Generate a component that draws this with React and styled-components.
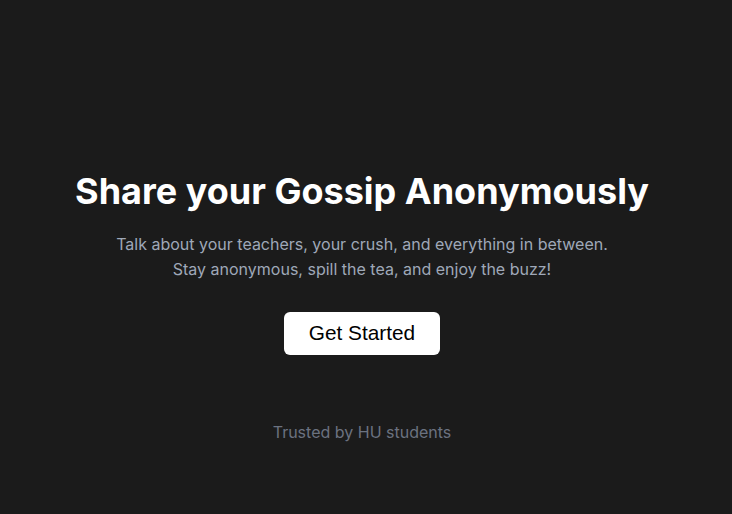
import React from "react";
import styled, { createGlobalStyle } from "styled-components";

const GlobalStyle = createGlobalStyle`
  html, body {
    margin: 0;
    padding: 0;
    background: #1b1b1b;
  }
  * {
    box-sizing: border-box;
  }
`;

const Page = styled.main`
  min-height: 514px;
  display: flex;
  flex-flow: column nowrap;
  align-items: center;
  justify-content: center;
  background: #1b1b1b;
  font-family: Inter, "Noto Sans", sans-serif;
  text-align: center;
  padding: 98px 8px 0 0;
`;

const Title = styled.h1`
  margin: 0 0 18px;
  color: #ffffff;
  font-size: 36px;
  font-weight: 700;
  line-height: 1.2;
`;

const Lead = styled.p`
  margin: 0 0 30px;
  color: #9fa8b8;
  font-size: 16px;
  line-height: 25px;
`;

const Button = styled.button`
  width: 156px;
  height: 43px;
  border: none;
  border-radius: 6px;
  background: #ffffff;
  color: #000000;
  font-family: "Liberation Sans", Arial, sans-serif;
  font-size: 20.8px;
  cursor: pointer;
`;

const Note = styled.p`
  margin: 67px 0 0;
  color: #6b7280;
  font-size: 16px;
`;

function App() {
  return (
    <>
      <GlobalStyle />
      <Page>
        <Title>Share your Gossip Anonymously</Title>
        <Lead>
          Talk about your teachers, your crush, and everything in between.
          <br />
          Stay anonymous, spill the tea, and enjoy the buzz!
        </Lead>
        <Button>Get Started</Button>
        <Note>Trusted by HU students</Note>
      </Page>
    </>
  );
}

export default App;
